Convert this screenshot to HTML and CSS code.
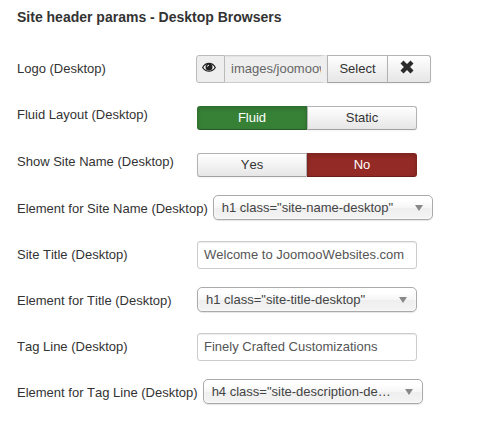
FILE: index.html
```html
<!DOCTYPE html>
<html lang="en">
<head>
<meta charset="utf-8">
<title>Site header params</title>
<link rel="stylesheet" href="styles.css">
</head>
<body>
<form class="params">
  <h4 class="heading">Site header params - Desktop Browsers</h4>
  <div class="row">
    <div class="label">Logo (Desktop)</div>
    <div class="media">
      <span class="addon"><svg class="eye" viewBox="0 0 14 10"><path d="M.7 5C3.800-.4 10.200-.4 13.300 5 10.200 9.900 3.800 9.900.7 5Z" fill="#fff" stroke="#222" stroke-width="1.300"/><circle cx="7" cy="4.600" r="3.500" fill="#222"/><path d="M5.300 4.200Q5.400 2.800 7 2.700" fill="none" stroke="#fff" stroke-width=".9"/></svg></span>
      <span class="path">images/joomoow</span>
      <span class="btn select">Select</span>
      <span class="btn clear"><svg class="cross" viewBox="0 0 14 14"><path d="M3.500.5 7 3.900 10.500.5 13.500 3.500 10.100 7 13.500 10.500 10.500 13.500 7 10.100 3.500 13.500.5 10.500 3.900 7 .5 3.500Z" fill="#2b2b2b"/></svg></span>
    </div>
  </div>
  <div class="row tall">
    <div class="label">Fluid Layout (Desktop)</div>
    <div class="switch"><span class="option green">Fluid</span><span class="option">Static</span></div>
  </div>
  <div class="row tall">
    <div class="label">Show Site Name (Desktop)</div>
    <div class="switch"><span class="option">Yes</span><span class="option red">No</span></div>
  </div>
  <div class="row">
    <div class="label">Element for Site Name (Desktop)</div>
    <div class="chosen"><span>h1 class="site-name-desktop"</span><i class="arrow"></i></div>
  </div>
  <div class="row">
    <div class="label">Site Title (Desktop)</div>
    <div class="field">Welcome to JoomooWebsites.com</div>
  </div>
  <div class="row">
    <div class="label">Element for Title (Desktop)</div>
    <div class="chosen"><span>h1 class="site-title-desktop"</span><i class="arrow"></i></div>
  </div>
  <div class="row">
    <div class="label">Tag Line (Desktop)</div>
    <div class="field">Finely Crafted Customizations</div>
  </div>
  <div class="row">
    <div class="label">Element for Tag Line (Desktop)</div>
    <div class="chosen"><span>h4 class="site-description-desktop"</span><i class="arrow"></i></div>
  </div>
</form>
</body>
</html>
```
FILE: styles.css
```css
* { box-sizing: border-box; }
body {
  margin: 0;
  background: #fff;
  color: #333;
  font: 13px/18px "Liberation Sans", Arial, sans-serif;
  font-kerning: none;
}
.params { padding: 8px 0 0 17px; }
.heading { margin: 0 0 29px; font-size: 14px; line-height: 18px; }
.row { display: flex; align-items: flex-start; height: 46px; }
.tall { height: 47px; }
.label { min-width: 180px; padding: 5px 5px 0 0; white-space: nowrap; }

.media { display: flex; height: 28px; margin-left: -1px; }
.addon {
  width: 29px;
  padding: 6px 0 0 5px;
  background: #eee;
  border: 1px solid #bbb;
  border-radius: 3px 0 0 3px;
}
.eye { display: block; width: 14px; height: 11px; }
.path {
  width: 102px;
  padding: 4px 0 0 6px;
  overflow: hidden;
  color: #666;
  background: #eee;
  border: solid #ccc;
  border-width: 1px 6px 1px 0;
  border-right-color: #eee;
  box-shadow: inset 0 1px 1px rgba(0, 0, 0, .05);
}
.btn, .option {
  background: linear-gradient(#fff, #e6e6e6);
  border: 1px solid #b3b3b3;
  border-bottom-color: #a2a2a2;
  text-align: center;
}
.btn { padding-top: 4px; box-shadow: 0 1px 2px rgba(0, 0, 0, .05); }
.select { width: 61px; }
.clear { width: 44px; margin-left: -1px; border-radius: 0 3px 3px 0; }
.cross { display: block; width: 14px; height: 14px; margin: 0 0 0 12px; }

.switch { display: flex; width: 220px; height: 24px; margin-top: 5px; }
.option { width: 110px; line-height: 22px; box-shadow: 0 1px 2px rgba(0, 0, 0, .05); }
.option:first-child { border-radius: 3px 0 0 3px; }
.option:last-child { border-radius: 0 3px 3px 0; }
.option.green, .option.red {
  color: #fff;
  border-color: rgba(0, 0, 0, .12) rgba(0, 0, 0, .12) rgba(0, 0, 0, .3);
  box-shadow: inset 0 2px 4px rgba(0, 0, 0, .15);
}
.option.green { background: #378137; }
.option.red { background: #942a25; }

.field {
  width: 220px;
  height: 28px;
  padding: 4px 6px;
  color: #555;
  border: 1px solid #ccc;
  border-radius: 3px;
  box-shadow: inset 0 1px 1px rgba(0, 0, 0, .075);
}
.chosen {
  display: flex;
  align-items: center;
  width: 220px;
  height: 25px;
  padding: 0 9px 0 8px;
  color: #444;
  background: linear-gradient(#fff 20%, #f6f6f6 50%, #eee 52%, #f4f4f4 100%);
  border: 1px solid #aaa;
  border-radius: 5px;
  box-shadow: inset 0 0 3px #fff, 0 1px 1px rgba(0, 0, 0, .1);
}
.chosen span {
  flex: 1;
  margin-right: 11px;
  overflow: hidden;
  text-overflow: ellipsis;
  white-space: nowrap;
}
.arrow {
  border: solid transparent;
  border-width: 6px 4px 0;
  border-top-color: #888;
}
```
